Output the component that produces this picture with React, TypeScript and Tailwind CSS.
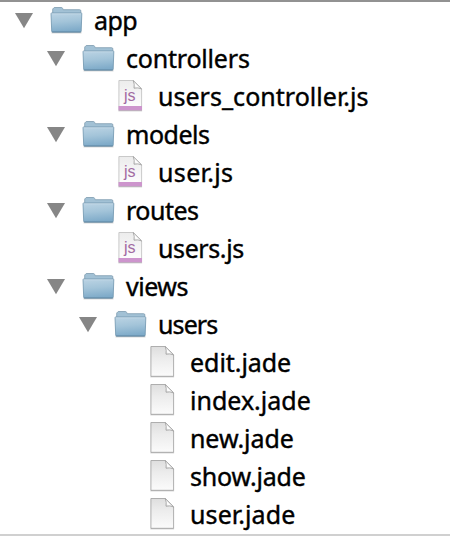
import React from "react";

type Kind = "folder" | "js" | "file";

interface Entry {
  name: string;
  kind: Kind;
  indent: string;
  spacing: string;
}

const entries: Entry[] = [
  { name: "app", kind: "folder", indent: "pl-[15px]", spacing: "tracking-[-0.55px]" },
  { name: "controllers", kind: "folder", indent: "pl-[47px]", spacing: "tracking-[-0.2px]" },
  { name: "users_controller.js", kind: "js", indent: "pl-[79px]", spacing: "tracking-[0.03px]" },
  { name: "models", kind: "folder", indent: "pl-[47px]", spacing: "tracking-[-0.5px]" },
  { name: "user.js", kind: "js", indent: "pl-[79px]", spacing: "tracking-[0.35px]" },
  { name: "routes", kind: "folder", indent: "pl-[47px]", spacing: "tracking-[-0.5px]" },
  { name: "users.js", kind: "js", indent: "pl-[79px]", spacing: "tracking-[-0.4px]" },
  { name: "views", kind: "folder", indent: "pl-[47px]", spacing: "tracking-[-0.5px]" },
  { name: "users", kind: "folder", indent: "pl-[79px]", spacing: "tracking-[-0.9px]" },
  { name: "edit.jade", kind: "file", indent: "pl-[111px]", spacing: "tracking-[-0.05px]" },
  { name: "index.jade", kind: "file", indent: "pl-[111px]", spacing: "tracking-[0px]" },
  { name: "new.jade", kind: "file", indent: "pl-[111px]", spacing: "tracking-[-0.08px]" },
  { name: "show.jade", kind: "file", indent: "pl-[111px]", spacing: "tracking-[-0.2px]" },
  { name: "user.jade", kind: "file", indent: "pl-[111px]", spacing: "tracking-[0.1px]" },
];

function Disclosure() {
  return (
    <svg width="18" height="38" viewBox="0 0 18 38">
      <path d="M0 11h18L9 26.3z" fill="#868686" />
    </svg>
  );
}

function FolderIcon() {
  return (
    <svg width="34" height="38" viewBox="0 0 34 38">
      <defs>
        <linearGradient id="folderFront" x1="0" y1="0" x2="0.15" y2="1">
          <stop offset="0" stopColor="#bcd4e4" />
          <stop offset="0.5" stopColor="#a3c4d9" />
          <stop offset="1" stopColor="#7fabc9" />
        </linearGradient>
      </defs>
      <path d="M1.5 30.8h30" stroke="#000" strokeOpacity="0.25" strokeWidth="1" />
      <path
        d="M2.7 13V7.2Q2.7 6.5 3.4 6.5L4.2 5.5H11.4Q12.3 5.5 12.7 6.5L13.2 7.7H29.6Q30.8 7.7 30.8 8.8V13z"
        fill="#a2c1d5"
        stroke="#7c9bae"
        strokeWidth="0.8"
      />
      <path
        d="M1.6 11H31.4Q31.8 11 31.8 11.6L31.2 29.2Q31.1 30.1 30.2 30.1H2.6Q1.8 30.1 1.7 29.2L1 11.6Q1 11 1.6 11z"
        fill="url(#folderFront)"
        stroke="#6f94ad"
        strokeWidth="0.8"
      />
      <path d="M1.7 11.8h29.5" stroke="#cbdeea" strokeWidth="0.7" />
      <path d="M2.2 30h28.5" stroke="#587f9b" strokeWidth="0.7" />
    </svg>
  );
}

function PageIcon({ js = false }: { js?: boolean }) {
  return (
    <svg width="26" height="38" viewBox="0 0 26 38">
      <defs>
        <linearGradient id="page" x1="0" y1="0" x2="0" y2="1">
          <stop offset="0" stopColor="#dedede" />
          <stop offset="0.4" stopColor="#ececec" />
          <stop offset="1" stopColor="#fbfbfb" />
        </linearGradient>
        <linearGradient id="jsPage" x1="0" y1="0" x2="0" y2="1">
          <stop offset="0" stopColor="#ececec" />
          <stop offset="1" stopColor="#ffffff" />
        </linearGradient>
        <linearGradient id="fold" x1="0" y1="1" x2="1" y2="0">
          <stop offset="0" stopColor="#d4d4d4" />
          <stop offset="0.35" stopColor="#ffffff" />
          <stop offset="1" stopColor="#e0e0e0" />
        </linearGradient>
      </defs>
      <path
        d="M0.9 2.5H15.2L23.6 10.9V32.3H0.9z"
        fill={js ? "url(#jsPage)" : "url(#page)"}
        stroke={js ? "#c4c4c4" : "#a6a6a6"}
        strokeWidth="0.9"
      />
      {js && <path d="M0.5 28H24v4.4H0.5z" fill="#cd95cd" />}
      <path d="M0.4 32.9h23.7" stroke="#8c8c8c" strokeOpacity="0.55" strokeWidth="0.8" />
      <path d="M15.2 2.5L23.6 10.9Q20 9.2 16 10.2Q16.8 6 15.2 2.5z" fill="url(#fold)" stroke="#9a9a9a" strokeWidth="0.8" />
      {js && (
        <text x="6" y="23" fontSize="16" fontWeight="400" fill="#a26ba2" fontFamily="Liberation Sans, sans-serif">
          js
        </text>
      )}
    </svg>
  );
}

function Row({ entry }: { entry: Entry }) {
  const { kind, name, indent, spacing } = entry;
  return (
    <li className={`flex h-[38px] items-center ${indent}`}>
      <div className="w-[35px] shrink-0">{kind === "folder" && <Disclosure />}</div>
      <div className={kind === "folder" ? "w-11 shrink-0" : "w-11 shrink-0 pl-1"}>
        {kind === "folder" ? <FolderIcon /> : <PageIcon js={kind === "js"} />}
      </div>
      <span
        className={`whitespace-pre pb-0.5 text-[25px] leading-[36px] font-normal [-webkit-text-stroke:0.4px_black] ${spacing}`}
      >
        {name}
      </span>
    </li>
  );
}

export default function App() {
  return (
    <div className="h-[536px] w-[450px] overflow-hidden border-t-2 border-[#929292] bg-white font-['Noto_Sans','Open_Sans',sans-serif] text-black">
      <ul className="h-[534px] border-b-2 border-[#d0d0d0]">
        {entries.map((entry, i) => (
          <Row key={i} entry={entry} />
        ))}
      </ul>
    </div>
  );
}
